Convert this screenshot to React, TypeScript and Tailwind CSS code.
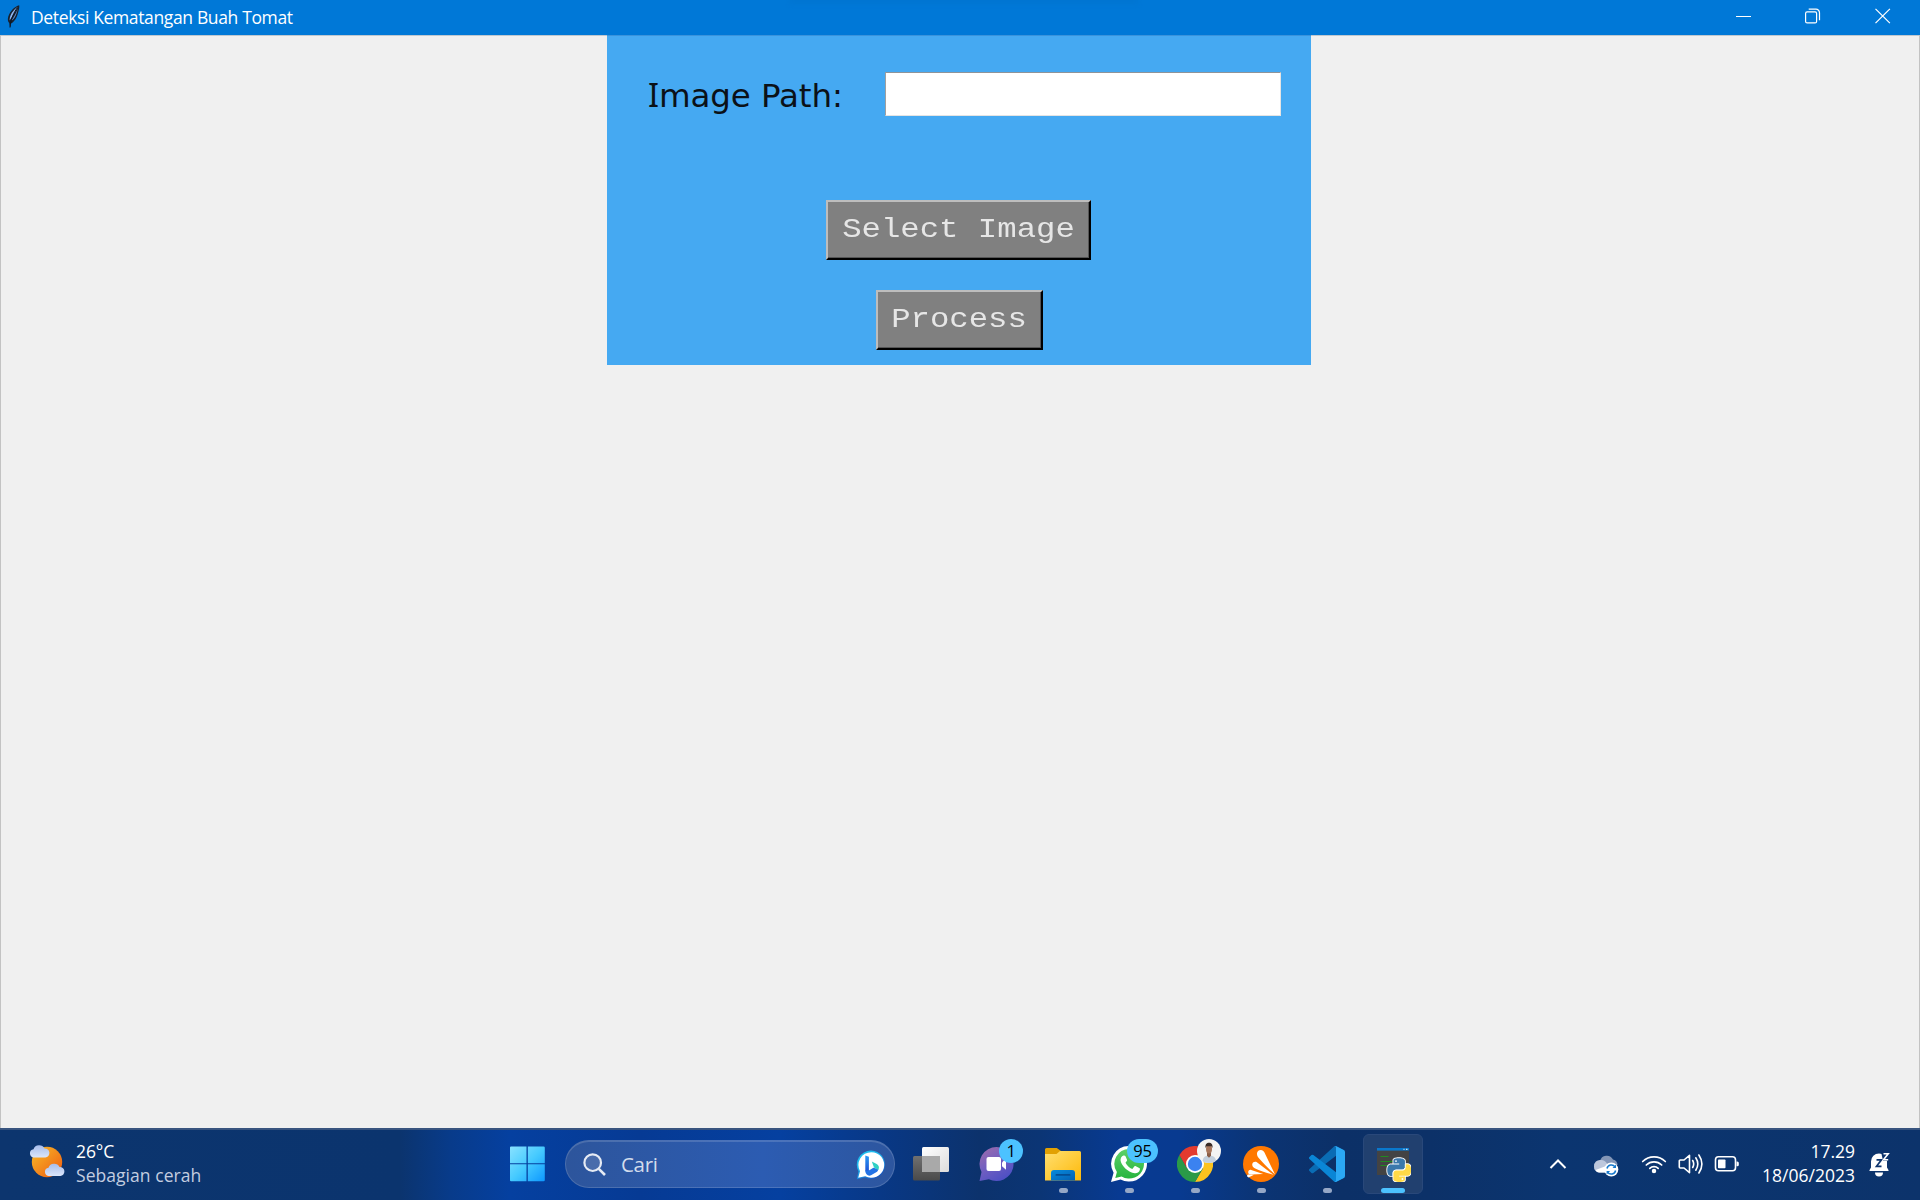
import type { ReactNode } from "react";

const UI = "font-['Segoe_UI','Open_Sans',sans-serif]";

function FeatherIcon() {
  return (
    <svg width="16" height="26" viewBox="0 0 16 26">
      <path d="M13.2 1.2C9 2.4 4.2 6.500 2.300 12.500c-.8 3-.6 5 .9 6.500l.8 4.500 1-4c4-2 6-6.500 7-10.500.7-3 1.700-5.500 1.200-7.800z" fill="#16202e" />
      <path d="M11.800 3C8.500 5 4.800 9 3.800 14l-.2 2.500C6 13 8.500 8.500 11.800 3z" fill="#8fb4ee" />
      <path d="M12 4.500C10 9 8 13 5 17c3-1.500 5-5 5.800-8.500z" fill="#5a88cc" />
      <path d="M4 23.500C4.800 15 8 8 11.500 3.500" fill="none" stroke="#0d1420" strokeWidth="1" />
    </svg>
  );
}

function TitleBar() {
  return (
    <header className="relative flex h-[35px] shrink-0 items-stretch bg-[#0078d7]">
      <div className="absolute left-[790px] top-0 h-[4px] w-[348px] bg-gradient-to-b from-[#0070c9] to-[#0078d7] blur-[2px]" />
      <div className="flex flex-1 items-center pl-[6px]">
        <div className="-mt-0.5"><FeatherIcon /></div>
        <h1 className={`${UI} ml-[9px] whitespace-nowrap text-[17.5px] leading-none tracking-[-0.36px] text-white`}>
          Deteksi Kematangan Buah Tomat
        </h1>
      </div>
      <button className="flex w-[70px] items-center justify-center pb-px" aria-label="Minimize">
        <svg width="16" height="16" viewBox="0 0 16 16"><path d="M0 7.500h15" stroke="#fff" /></svg>
      </button>
      <button className="flex w-[68px] items-center justify-center pb-[3px]" aria-label="Restore">
        <svg width="16" height="16" viewBox="0 0 16 16" fill="none" stroke="#fff" strokeWidth="1.2">
          <rect x=".6" y="3.900" width="11" height="11" rx="1.500" />
          <path d="M3.700 1.200h7.300a3.500 3.500 0 0 1 3.500 3.500v7.600" />
        </svg>
      </button>
      <button className="flex w-[73px] items-center justify-center pb-[3px] pr-px" aria-label="Close">
        <svg width="16" height="16" viewBox="0 0 16 16"><path d="M.5.800l14.400 14.400M14.900.800.5 15.200" stroke="#fff" strokeWidth="1.200" /></svg>
      </button>
    </header>
  );
}

function TkButton({ children, width }: { children: ReactNode; width: string }) {
  return (
    <button
      className={`${width} flex h-[60px] items-center justify-center border-2 border-b-[#000] border-l-[#bdbdbd] border-r-[#000] border-t-[#bdbdbd] bg-[#808080] font-['Courier_New','Liberation_Mono',monospace] text-[32.300px] leading-none text-[#e6e6e6] shadow-[inset_-1px_-1px_0_#555]`}
    >
      <span className="inline-block origin-center scale-y-[0.86]">{children}</span>
    </button>
  );
}

function Panel() {
  return (
    <section className="flex h-[330px] w-[704px] flex-col items-center border-t border-[#3a93dc] bg-[#45a9f2]">
      <div className="mt-[36px] flex h-[44px] w-full items-center pl-[41px]">
        <label className="w-[237px] whitespace-pre pt-[3px] font-['DejaVu_Sans',sans-serif] text-[32.500px] leading-none tracking-[-0.1px] text-[#0b1118]">
          <span className="font-['Noto_Sans']">I</span>mage Path:
        </label>
        <input className="h-[44px] w-[396px] border border-b-[#e4e4e4] border-l-[#a0a0a0] border-r-[#e4e4e4] border-t-[#8f9499] bg-white" />
      </div>
      <div className="mr-px mt-[84px]"><TkButton width="w-[265px]">Select Image</TkButton></div>
      <div className="mt-[30px]"><TkButton width="w-[167px]">Process</TkButton></div>
    </section>
  );
}

function WeatherIcon() {
  return (
    <svg className="-mt-1" width="37" height="36" viewBox="0 0 37 36">
      <defs>
        <linearGradient id="sun" x1="0" y1="0" x2="1" y2="1"><stop stopColor="#f8bd28" /><stop offset="1" stopColor="#ee5a12" /></linearGradient>
        <linearGradient id="cloud" x1="0" y1="0" x2="0" y2="1"><stop stopColor="#a7bdeb" /><stop offset="1" stopColor="#dbe6fb" /></linearGradient>
      </defs>
      <circle cx="18" cy="18" r="15.200" fill="url(#sun)" />
      <path d="M4.500 13.500a4.200 4.200 0 0 1 0-8.300A6 6 0 0 1 15.500 4.500a4.500 4.500 0 0 1 .8 9z" fill="url(#cloud)" />
      <path d="M19.500 32a4.200 4.200 0 0 1 0-8.300A6 6 0 0 1 30.500 23a4.500 4.500 0 0 1 .8 9z" fill="url(#cloud)" />
    </svg>
  );
}

function StartIcon() {
  return (
    <svg width="36" height="36" viewBox="0 0 36 36">
      <defs><linearGradient id="win" gradientUnits="userSpaceOnUse" x1="0" y1="0" x2="36" y2="36"><stop stopColor="#8ae2ff" /><stop offset=".5" stopColor="#45caff" /><stop offset="1" stopColor="#0a95ff" /></linearGradient></defs>
      <g fill="url(#win)">
        <path d="M1 .5h15.500v16.700H0V1.500a1 1 0 0 1 1-1z" />
        <path d="M17.800.500H33.500a1.300 1.300 0 0 1 1.300 1.300v15.400h-17z" />
        <path d="M0 18.300h16.500v17H1a1 1 0 0 1-1-1z" />
        <path d="M17.800 18.300h17V34a1.300 1.300 0 0 1-1.300 1.300H17.800z" />
      </g>
    </svg>
  );
}

function BingIcon() {
  return (
    <svg width="30" height="30" viewBox="0 0 30 30">
      <defs>
        <linearGradient id="bring" x1="0" y1="0" x2=".6" y2="1"><stop stopColor="#19c5ee" /><stop offset=".5" stopColor="#20b2ec" /><stop offset="1" stopColor="#1457c8" /></linearGradient>
        <linearGradient id="bb" x1="0" y1="0" x2="0" y2="1"><stop stopColor="#2a9cf4" /><stop offset="1" stopColor="#1b4bd4" /></linearGradient>
      </defs>
      <path d="M15 .6a14.200 14.200 0 1 1-6.300 27L.8 29.200l1.700-7.600A14.200 14.200 0 0 1 15 .6z" fill="url(#bring)" />
      <path d="M15.300 2.200a12.800 12.800 0 1 1-6.100 24L2.200 27.700l1.800-6.500A12.800 12.800 0 0 1 15.300 2.200z" fill="#fff" />
      <path d="M9.300 5.500l3.600 1.300v13.700l-2 2.500-1.600-2z" fill="url(#bb)" />
      <path d="M9.300 20.500l3.600 0 4.500-2.800 5 1.200c-.2 1.600-1 2.700-2.200 3.400l-5.200 3c-2.600 1.300-5.700-.8-5.700-4.800z" fill="#2373e6" />
      <path d="M15.800 11.500l4.900 2.400c2.400 1.500 2.900 3.600 1.400 6.200L18 17.500z" fill="#2fd0c4" />
    </svg>
  );
}

function TaskViewIcon() {
  return (
    <svg width="36" height="36" viewBox="0 0 36 36">
      <defs>
        <linearGradient id="tvw" x1="0" y1="0" x2="1" y2="1"><stop stopColor="#fff" /><stop offset="1" stopColor="#dcdcdc" /></linearGradient>
        <linearGradient id="tvg" x1="0" y1="0" x2="0" y2="1"><stop stopColor="#707070" /><stop offset="1" stopColor="#4a4a4a" /></linearGradient>
      </defs>
      <rect x="0" y="10" width="27" height="24.500" rx="1.500" fill="url(#tvg)" />
      <rect x="9" y="1" width="27" height="25" rx="1.500" fill="url(#tvw)" />
      <path d="M9 10h18v16H10.500A1.500 1.500 0 0 1 9 24.500z" fill="#a9a9a9" />
    </svg>
  );
}

function ChatIcon() {
  return (
    <svg width="36" height="36" viewBox="0 0 36 36">
      <defs><linearGradient id="chat" x1="0" y1="0" x2=".6" y2="1"><stop stopColor="#a06ca8" /><stop offset=".5" stopColor="#7460c0" /><stop offset="1" stopColor="#4f50c4" /></linearGradient></defs>
      <path d="M17.500 1a17 17 0 1 1-7.600 32.200L.5 35l2-9A17 17 0 0 1 17.500 1z" fill="url(#chat)" />
      <rect x="7.500" y="11" width="14.500" height="14" rx="2" fill="#fff" />
      <path d="M23 16.500l4-4.200v11.400l-4-3.500z" fill="#fff" />
    </svg>
  );
}

function FolderIcon() {
  return (
    <svg width="36" height="36" viewBox="0 0 36 36">
      <defs>
        <linearGradient id="fold" x1="0" y1="0" x2="1" y2="1"><stop stopColor="#ffdf70" /><stop offset="1" stopColor="#fdb90a" /></linearGradient>
        <linearGradient id="foldb" x1="0" y1="0" x2="1" y2="1"><stop stopColor="#078bdc" /><stop offset="1" stopColor="#0460b4" /></linearGradient>
      </defs>
      <path d="M0 3.500A1.500 1.500 0 0 1 1.500 2h10.300L16 5v5H0z" fill="#e2a103" />
      <path d="M0 8h11.500L15 5h19.500A1.500 1.500 0 0 1 36 6.500v28H0z" fill="url(#fold)" />
      <path d="M6 34.500V27a3 3 0 0 1 3-3h18a3 3 0 0 1 3 3v7.500z" fill="url(#foldb)" />
      <rect x="10.500" y="28" width="15" height="1.800" rx=".9" fill="#044e94" />
    </svg>
  );
}

function WhatsAppIcon() {
  return (
    <svg width="36" height="36" viewBox="0 0 36 36">
      <defs><linearGradient id="wa" x1="0" y1="0" x2="0" y2="1"><stop stopColor="#5fd16a" /><stop offset="1" stopColor="#27b43e" /></linearGradient></defs>
      <path d="M18.200 0a17.800 17.800 0 1 1-8.600 33.400L0 36l2.600-9.300A17.800 17.800 0 0 1 18.200 0z" fill="#fff" />
      <path d="M18.200 3a14.800 14.800 0 1 1-7.600 27.500L4.300 31.900l1.600-5.900A14.800 14.800 0 0 1 18.200 3z" fill="url(#wa)" />
      <path d="M12.500 9.500c.9-.2 1.600 0 2 .8l1.500 3.500c.3.700 0 1.200-1.500 2.900 1.600 3 3.700 5 6.800 6.300l2-2.400c.5-.6.900-.6 1.600-.3l3.300 1.600c.9.500.9.900.6 2-.6 2.300-3 3.500-5 3.300-6.500-.7-13.300-7.400-14.200-12.500-.3-2 .8-4.500 2.900-5.200z" fill="#fff" />
    </svg>
  );
}

function ChromeIcon() {
  return (
    <svg width="36" height="36" viewBox="0 0 36 36">
      <path d="M18 9h15.600A18 18 0 0 1 18 36l7.800-13.500z" fill="#fcc31e" />
      <path d="M10.200 22.500L2.400 9A18 18 0 0 0 18 36l7.800-13.500z" fill="#2a9a48" />
      <path d="M2.400 9A18 18 0 0 1 33.600 9H18l-7.800 13.500z" fill="#e33b2e" />
      <circle cx="18" cy="18" r="9" fill="#fff" />
      <circle cx="18" cy="18" r="7.200" fill="#3b82f0" />
    </svg>
  );
}

function AvatarIcon() {
  return (
    <svg width="24" height="24" viewBox="0 0 24 24">
      <defs><clipPath id="av"><circle cx="12" cy="12" r="12" /></clipPath></defs>
      <g clipPath="url(#av)">
        <rect width="24" height="24" fill="#f4f4f3" />
        <path d="M5.500 24c0-5.500 2-7.200 6.500-7.500 5 .2 7 2 7.300 7.500z" fill="#c3d0dd" />
        <path d="M10 13h4v3.800l-2 2-2-2z" fill="#8a5d46" />
        <ellipse cx="12" cy="10" rx="3" ry="4.500" fill="#a8765b" />
        <path d="M8.500 9c-.5-3.500 1.200-5.200 3.500-5.200S16 5.500 15.500 9l-1-1.800h-5z" fill="#3a2c26" />
      </g>
    </svg>
  );
}

function AvastIcon() {
  return (
    <svg width="36" height="36" viewBox="0 0 36 36">
      <circle cx="18" cy="18" r="18" fill="#ff7800" />
      <path d="M14 8.200c-.5-3 3.300-5.700 6.300-3.200 1 .9 1.500 2 2 3.200L32 28.500C25 22 19 16 15.300 11.500c-.8-1-1.200-2-1.300-3.300z" fill="#fff" />
      <path d="M9.300 18c.4-2 2.900-2.700 4.600-1.700L30.500 28.800C23 26.500 17 24.700 11.700 22.200c-1.800-.9-2.700-2.400-2.400-4.200z" fill="#fff" />
      <path d="M5.200 26c.2-1.500 1.500-2.400 3-2.100l12 4.100-12 .5c-2 0-3.200-.8-3-2.500z" fill="#fff" />
      <path d="M4 30.200c0-1 .9-1.700 2-1.600l5 .1-5.500 2.900z" fill="#fff" />
    </svg>
  );
}

function CodeIcon() {
  return (
    <svg width="36" height="36" viewBox="0 0 100 100">
      <path fill="#0a6cb4" d="M96.460 10.800L75.860.87A6.230 6.230 0 0 0 68.750 2.080L1.300 63.580a4.170 4.170 0 0 0 0 6.160l5.510 5.010a4.170 4.170 0 0 0 5.320.24l81.230-61.620c2.730-2.070 6.640-.13 6.640 3.290v-.24a6.250 6.250 0 0 0-3.540-5.630z" />
      <path fill="#0a86d6" d="M96.460 89.200l-20.600 9.920a6.230 6.230 0 0 1-7.110-1.210L1.300 36.420a4.170 4.170 0 0 1 0-6.160l5.510-5.010a4.170 4.170 0 0 1 5.320-.24l81.230 61.620c2.730 2.070 6.640.13 6.640-3.290v.24a6.250 6.250 0 0 1-3.540 5.630z" />
      <path fill="#2ba8f4" d="M75.860 99.130a6.230 6.230 0 0 1-7.110-1.210c2.310 2.310 6.250.67 6.250-2.590V4.670c0-3.260-3.940-4.900-6.250-2.590a6.230 6.230 0 0 1 7.110-1.210l20.600 9.910A6.250 6.250 0 0 1 100 16.410v67.170a6.250 6.250 0 0 1-3.540 5.630z" />
    </svg>
  );
}

function PythonConsoleIcon() {
  return (
    <svg width="36" height="36" viewBox="0 0 36 36">
      <rect x="2" y="2" width="32" height="27" fill="#434343" />
      <rect x="2" y="2" width="32" height="2.600" fill="#0a78cc" />
      <path d="M28.500 3.300h1M31 3.300h1.500" stroke="#fff" />
      <path d="M5.500 10.500h8M5.500 15.500h12M5.500 19.500h10" stroke="#218a21" strokeWidth="1.200" />
      <g transform="translate(12.300 12.200) scale(.99)" stroke="#fff" strokeWidth="1.800" paintOrder="stroke" strokeLinejoin="round">
        <path fill="#3b78ac" d="M14.250.18l.9.200.73.260.59.300.45.320.34.340.25.340.16.330.1.300.04.260.02.200-.01.130V8.500l-.05.630-.13.550-.21.460-.26.380-.3.310-.33.250-.35.190-.35.140-.33.100-.3.070-.26.040-.21.020H8.770l-.69.050-.59.140-.5.220-.41.270-.33.320-.27.350-.2.360-.15.370-.1.350-.07.320-.04.270-.02.210v3.060H3.170l-.21-.03-.28-.07-.32-.12-.35-.18-.36-.26-.36-.36-.35-.46-.32-.59-.28-.73-.21-.88-.14-1.050-.05-1.230.06-1.220.16-1.040.24-.87.32-.71.36-.57.4-.44.42-.33.42-.24.4-.16.36-.1.32-.05.24-.01h.16l.06.010h8.160v-.83H6.180l-.01-2.750-.02-.37.05-.34.11-.31.17-.28.25-.26.31-.23.38-.2.44-.18.51-.15.58-.12.64-.1.71-.06.77-.04.84-.02 1.270.05z" />
        <path fill="#ffd947" d="M21.040 6.110l.28.060.32.120.35.180.36.270.36.350.35.470.32.590.28.730.21.880.14 1.040.05 1.230-.06 1.230-.16 1.040-.24.860-.32.710-.36.570-.4.450-.42.330-.42.240-.4.160-.36.090-.32.050-.24.020-.16-.01h-8.220v.82h5.840l.01 2.760.02.360-.05.340-.11.310-.17.290-.25.250-.31.240-.38.200-.44.170-.51.150-.58.130-.64.090-.71.070-.77.040-.84.010-1.270-.04-1.070-.14-.9-.2-.73-.25-.59-.3-.45-.33-.34-.34-.25-.34-.16-.33-.1-.3-.04-.25-.02-.2.010-.13v-5.340l.05-.64.13-.54.21-.46.26-.38.3-.32.33-.24.35-.2.35-.14.33-.1.3-.06.26-.04.21-.02.13-.01h5.840l.69-.05.59-.14.5-.21.41-.28.33-.32.27-.35.2-.36.15-.36.1-.35.07-.32.04-.28.02-.21V6.070h2.090l.14.010z" />
        <circle cx="8.800" cy="2.900" r=".9" fill="#fff" stroke="none" />
        <circle cx="15.300" cy="21" r=".9" fill="#fff" stroke="none" />
      </g>
    </svg>
  );
}

type AppProps = { icon: ReactNode; badge?: ReactNode; running?: boolean; active?: boolean };

function AppCell({ icon, badge, running, active }: AppProps) {
  return (
    <div className="relative flex h-full w-[66px] shrink-0 items-center justify-center">
      {active && <div className="absolute left-[3px] top-[6px] h-[60px] w-[60px] rounded-[6px] border border-[#29487a] bg-[#21406f]" />}
      <div className="relative">{icon}</div>
      {badge && <div className="absolute left-[35px] top-[11px] flex">{badge}</div>}
      {running && <div className="absolute bottom-[7px] h-[5px] w-[9px] rounded-full bg-[#95a7c6]" />}
      {active && <div className="absolute bottom-[7px] h-[5px] w-[24px] rounded-full bg-[#4cc2ff]" />}
    </div>
  );
}

function Badge({ children, width }: { children: ReactNode; width: string }) {
  return (
    <span className={`${UI} ${width} flex h-6 items-center justify-center rounded-full bg-[#4cc2ff] text-[16.500px] leading-none tracking-[-0.3px] text-black`}>
      {children}
    </span>
  );
}

function Tray() {
  return (
    <div className="ml-auto flex h-full items-center text-white">
      <svg className="mr-[26px]" width="18" height="12" viewBox="0 0 18 12"><path d="M1.500 10l7.500-7.500 7.500 7.500" fill="none" stroke="#fff" strokeWidth="2" /></svg>
      <svg className="mr-[22px] mt-1" width="26" height="22" viewBox="0 0 26 22">
        <path d="M7 6a7 7 0 0 1 13-1.500c3 .5 4.500 3 4.500 5.500L14 12z" fill="#8396b7" />
        <path d="M1 11.500A6 6 0 0 1 8 5c3 0 4.500 1.500 6 3.500l6 3-4 6H6a5.500 5.500 0 0 1-5-6z" fill="#bcc7dc" />
        <path d="M2.500 15l12-4.500v7H6q-2.500 0-3.500-2.500z" fill="#fff" />
        <circle cx="18.300" cy="14.500" r="7" fill="#fff" />
        <path d="M14 13.500a4.500 4.500 0 0 1 8-1.800M22.600 15.500a4.500 4.500 0 0 1-8 1.800" fill="none" stroke="#1779cc" strokeWidth="1.500" />
        <path d="M23 9.500v3.500h-3.500zM13.600 19.500V16h3.500z" fill="#1779cc" />
      </svg>
      <svg className="mr-[11px] -mt-px" width="26" height="20" viewBox="0 0 26 20" fill="none" stroke="#fff" strokeWidth="1.700" strokeLinecap="round">
        <path d="M1.700 7.500a16 16 0 0 1 22.600 0M5.300 11a11 11 0 0 1 15.400 0M8.800 14.300a6 6 0 0 1 8.400 0" />
        <circle cx="13" cy="17" r="1.400" fill="#fff" />
      </svg>
      <svg className="mr-[11px]" width="25" height="22" viewBox="0 0 25 22" fill="none" stroke="#fff" strokeWidth="1.600" strokeLinecap="round" strokeLinejoin="round">
        <path d="M1.300 8a1 1 0 0 1 1-1H6l5.500-4.700v17.400L6 15H2.300a1 1 0 0 1-1-1z" />
        <path d="M14.700 7.500q2 3.500 0 7M17.800 4.800q4 6.200 0 12.400M20.900 2q6 9 0 18" />
      </svg>
      <svg className="mr-[21px]" width="26" height="18" viewBox="0 0 26 18">
        <rect x="1.500" y="1.800" width="20" height="14" rx="3" fill="none" stroke="#fff" strokeWidth="1.600" />
        <rect x="4" y="4.400" width="7.500" height="8.800" rx=".8" fill="#fff" />
        <path d="M22.500 6.500h.8a1.500 1.500 0 0 1 1.500 1.500v1.700a1.500 1.500 0 0 1-1.500 1.500h-.8z" fill="#fff" />
      </svg>
      <div className={`${UI} -mt-[2px] flex w-[94px] flex-col items-end text-[17.500px] leading-6 tracking-[0px]`}>
        <span>17.29</span>
        <span className="whitespace-nowrap">18/06/2023</span>
      </div>
      <svg className="ml-[13px] mr-[30px]" width="22" height="26" viewBox="0 0 22 26">
        <path d="M11 2.500a8 8 0 0 1 8 8v6l1.600 2.700c.2.500 0 .8-.6.800H2c-.6 0-.8-.3-.6-.8L3 16.500v-6a8 8 0 0 1 8-8z" fill="#fff" />
        <path d="M7 21.500h8a4 4 0 0 1-8 0z" fill="#fff" />
        <path d="M13 .8h9v9h-7z" fill="#0c336c" />
        <path d="M8.500 8.800h5l-5 6.500h5" fill="none" stroke="#0c336c" strokeWidth="1.700" />
        <path d="M15.500 2.800h4.700l-4.700 6h4.700" fill="none" stroke="#fff" strokeWidth="1.600" />
      </svg>
    </div>
  );
}

function Taskbar() {
  return (
    <footer className="relative flex h-[72px] shrink-0 items-center bg-[linear-gradient(90deg,#0c356e_0,#0b346e_400px,#083b8a_450px,#0540a0_510px,#063a94_640px,#0540a0_780px,#083886_880px,#0c326c_980px,#0b3575_1040px,#083a92_1120px,#083a90_1180px,#0b3474_1260px,#0c3067_1340px,#0c3168_1430px,#0b3570_1560px,#0c336b_1920px)]">
      <div className="absolute inset-x-0 top-0 h-[2px] bg-[#38547f]" />
      <div className="flex w-[495px] items-center pl-[29px]">
        <WeatherIcon />
        <div className={`${UI} -mt-[2px] ml-[10px] flex flex-col text-[17.500px] leading-6 tracking-[0.05px]`}>
          <span className="tracking-[-0.1px] text-white">26°C</span>
          <span className="whitespace-nowrap text-[#c3cde0]">Sebagian cerah</span>
        </div>
      </div>
      <AppCell icon={<StartIcon />} />
      <div className="ml-[4px] mr-[3px] flex h-[48px] w-[330px] items-center rounded-full border border-t-2 border-[#ffffff26] bg-[linear-gradient(90deg,#2d559c,#2c5cb2_60%,#2d569f)] pl-[17px] pr-[8px]">
        <svg width="24" height="24" viewBox="0 0 24 24" fill="none" stroke="#e6ebf4" strokeWidth="2.200">
          <circle cx="9.700" cy="9.700" r="8.300" fill="#ffffff22" /><path d="M15.800 15.800l6.200 6.200" strokeWidth="2.600" />
        </svg>
        <span className={`${UI} ml-[14px] flex-1 text-[20.500px] leading-none tracking-[-0.3px] text-[#d3dcec]`}>Cari</span>
        <BingIcon />
      </div>
      <AppCell icon={<TaskViewIcon />} />
      <AppCell icon={<ChatIcon />} badge={<Badge width="w-6">1</Badge>} />
      <AppCell icon={<FolderIcon />} running />
      <AppCell icon={<WhatsAppIcon />} running badge={<Badge width="-ml-[4px] w-[31px]">95</Badge>} />
      <AppCell icon={<ChromeIcon />} running badge={<AvatarIcon />} />
      <AppCell icon={<AvastIcon />} running />
      <AppCell icon={<CodeIcon />} running />
      <AppCell icon={<PythonConsoleIcon />} active />
      <Tray />
    </footer>
  );
}

export default function App() {
  return (
    <div className="flex h-[1200px] w-[1920px] flex-col overflow-hidden bg-[#f0f0f0]">
      <TitleBar />
      <main className="flex flex-1 items-start justify-center border-x border-[#c3c3c3] bg-[#f0f0f0] pr-[2px] shadow-[inset_0_1px_0_#c0c8d0]">
        <Panel />
      </main>
      <Taskbar />
    </div>
  );
}
